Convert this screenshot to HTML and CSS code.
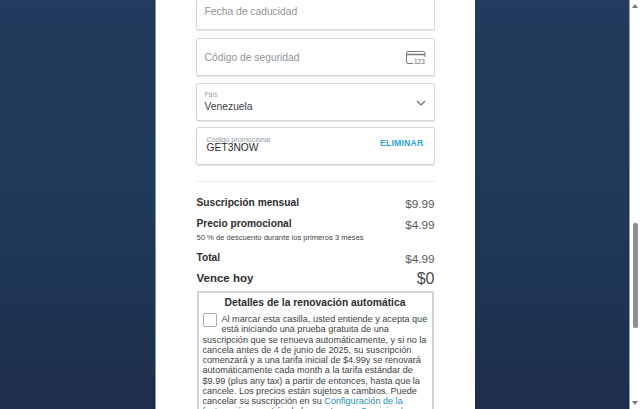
FILE: index.html
```html
<!DOCTYPE html>
<html lang="es">
<head>
    <meta charset="UTF-8">
    <meta name="viewport" content="width=device-width, initial-scale=1.0">
    <title>Pago</title>
    <link rel="stylesheet" href="styles.css">
</head>
<body>
<div class="page">
    <div class="backdrop">
        <main class="card">
            <div class="field field-cut">
                <span class="placeholder">Fecha de caducidad</span>
            </div>

            <div class="field field-tall">
                <span class="placeholder">Código de seguridad</span>
                <svg class="cvv-icon" width="20" height="14" viewBox="0 0 20 14" fill="none" stroke="#77797c" stroke-width="1">
                    <path d="M19 6V2A1.500 1.500 0 0 0 17.500.5H2A1.500 1.500 0 0 0 .5 2v9A1.500 1.500 0 0 0 2 12.500h5"/>
                    <path d="M.5 3.500h18.500" stroke-width="1.500"/>
                    <text x="8" y="13" class="cvv-text">123</text>
                </svg>
            </div>

            <div class="field field-select">
                <div>
                    <div class="small-label">País</div>
                    <div class="value">Venezuela</div>
                </div>
                <svg class="chevron" width="10" height="6" viewBox="0 0 10 6" fill="none" stroke="#66696d" stroke-width="1.200">
                    <path d="M1 1l4 4 4-4"/>
                </svg>
            </div>

            <div class="field field-promo">
                <div>
                    <div class="promo-label">Código promocional</div>
                    <div class="promo-value">GET3NOW</div>
                </div>
                <span class="remove">ELIMINAR</span>
            </div>

            <hr class="divider">

            <div class="row row-monthly">
                <span class="row-title">Suscripción mensual</span>
                <span class="price">$9.99</span>
            </div>
            <div class="row row-promo">
                <span class="row-title">Precio promocional</span>
                <span class="price">$4.99</span>
            </div>
            <p class="row-note">50 % de descuento durante los primeros 3 meses</p>
            <div class="row row-total">
                <span class="row-title">Total</span>
                <span class="price">$4.99</span>
            </div>
            <div class="row row-due">
                <span class="due-title">Vence hoy</span>
                <span class="due-price">$0</span>
            </div>

            <section class="renewal">
                <h2>Detalles de la renovación automática</h2>
                <p>
                    <span class="checkbox"></span>
                    Al marcar esta casilla, usted entiende y acepta que está iniciando una prueba gratuita de una suscripción que se renueva automáticamente, y si no la cancela antes de 4 de junio de 2025, su suscripción comenzará y a una tarifa inicial de $4.99y se renovará automáticamente cada month a la tarifa estándar de $9.99 (plus any tax) a partir de entonces, hasta que la cancele. Los precios están sujetos a cambios. Puede cancelar su suscripción en su <a href="#">Configuración de la facturación</a> y gestión de la cuenta o en <a href="#">Servicio al cliente</a>.
                </p>
            </section>
        </main>
    </div>

    <div class="scrollbar">
        <span class="arrow arrow-up"></span>
        <div class="track">
            <div class="thumb"></div>
        </div>
        <span class="arrow arrow-down"></span>
    </div>
</div>
</body>
</html>
```

FILE: styles.css
```css
* {
    box-sizing: border-box;
    margin: 0;
    padding: 0;
}

html, body {
    height: 100%;
    overflow: hidden;
}

body {
    font-family: "Liberation Sans", Arial, sans-serif;
    color: #2c2e2f;
}

.page {
    display: flex;
    height: 409px;
}

.backdrop {
    flex: 1;
    display: flex;
    justify-content: center;
    overflow: hidden;
    background: linear-gradient(#243a5e, #1f3a58 50%, #1d2d4b);
    border-right: 1px solid #8a9bb0;
}

.card {
    width: 320px;
    height: 409px;
    padding: 0 40px;
    background: #fff;
    border-left: 1px solid #7f93ab;
    overflow: hidden;
}

.field {
    display: flex;
    justify-content: space-between;
    align-items: center;
    border: 1px solid #d5d7d9;
    border-radius: 2px;
    box-shadow: 0 1px 1px #e4e5e6;
    padding: 0 8px;
}

.field-cut {
    height: 30px;
    border-top: none;
    border-radius: 0 0 2px 2px;
    padding-bottom: 6px;
}

.field-tall {
    height: 38px;
    margin-top: 8px;
}

.field-select {
    height: 38px;
    margin-top: 7px;
    padding-top: 1px;
}

.field-promo {
    height: 38px;
    margin-top: 6px;
    padding: 0 10px 4px 10px;
}

.placeholder {
    font-size: 10.300px;
    color: #8f9498;
}

.cvv-icon {
    margin-top: 1px;
}

.cvv-text {
    font-size: 6.500px;
    fill: #66686b;
    stroke: none;
    font-family: "Liberation Sans", Arial, sans-serif;
}

.small-label {
    font-size: 6.500px;
    line-height: 7px;
    color: #9aa0a4;
}

.value {
    font-size: 10.300px;
    line-height: 15px;
    margin-top: 1px;
    color: #3c3f42;
}

.promo-label {
    font-size: 7.200px;
    line-height: 7px;
    color: #8f9ba3;
}

.promo-value {
    font-size: 10.300px;
    line-height: 10px;
    color: #2c2e2f;
}

.remove {
    font-size: 8.700px;
    font-weight: bold;
    color: #2aa5d6;
    letter-spacing: 0.2px;
    margin-bottom: 2px;
}

.divider {
    border: none;
    border-top: 1px solid #eceded;
    margin: 16px 0 0;
}

.row {
    display: flex;
    justify-content: space-between;
    align-items: flex-start;
    padding-left: 1px;
}

.row-title {
    font-size: 10.200px;
    font-weight: bold;
    color: #2c2e2f;
}

.price {
    font-size: 11.700px;
    color: #55585b;
}

.row-monthly {
    margin-top: 15px;
}

.row-promo {
    margin-top: 8px;
}

.row-note {
    font-size: 7.600px;
    line-height: 10px;
    margin-top: 2px;
    padding-left: 1px;
    color: #3c3f42;
}

.row-total {
    margin-top: 9px;
}

.row-due {
    margin-top: 5px;
}

.due-title {
    font-size: 11.500px;
    font-weight: bold;
    margin-top: 2px;
    color: #2c2e2f;
}

.due-price {
    font-size: 16px;
    color: #4a4c4f;
}

.renewal {
    margin: 3px 1px 0;
    padding: 3px 4px 0;
    border: 2px solid #d0d2d4;
    border-bottom: none;
    border-radius: 2px 2px 0 0;
}

.renewal h2 {
    font-size: 10.300px;
    line-height: 13px;
    font-weight: bold;
    text-align: center;
    color: #2c2e2f;
}

.renewal p {
    margin-top: 5px;
    font-size: 9.100px;
    line-height: 10.250px;
    color: #3c3f42;
}

.renewal a {
    color: #1f8fc0;
    text-decoration: none;
}

.checkbox {
    float: left;
    width: 14px;
    height: 14px;
    margin: -1px 5px 2px 0;
    border: 1px solid #a9abad;
    border-radius: 2px;
}

.scrollbar {
    width: 10px;
    display: flex;
    flex-direction: column;
    align-items: center;
    background: #fff;
}

.track {
    flex: 1;
    width: 100%;
    padding-top: 215px;
    display: flex;
    justify-content: center;
}

.thumb {
    width: 5px;
    height: 105px;
    border-radius: 2px;
    background: #8e8e90;
}

.arrow {
    width: 0;
    height: 0;
    border-left: 3px solid transparent;
    border-right: 3px solid transparent;
}

.arrow-up {
    margin-top: 4px;
    border-bottom: 4px solid #77787a;
}

.arrow-down {
    margin-bottom: 4px;
    border-top: 4px solid #77787a;
}
```
